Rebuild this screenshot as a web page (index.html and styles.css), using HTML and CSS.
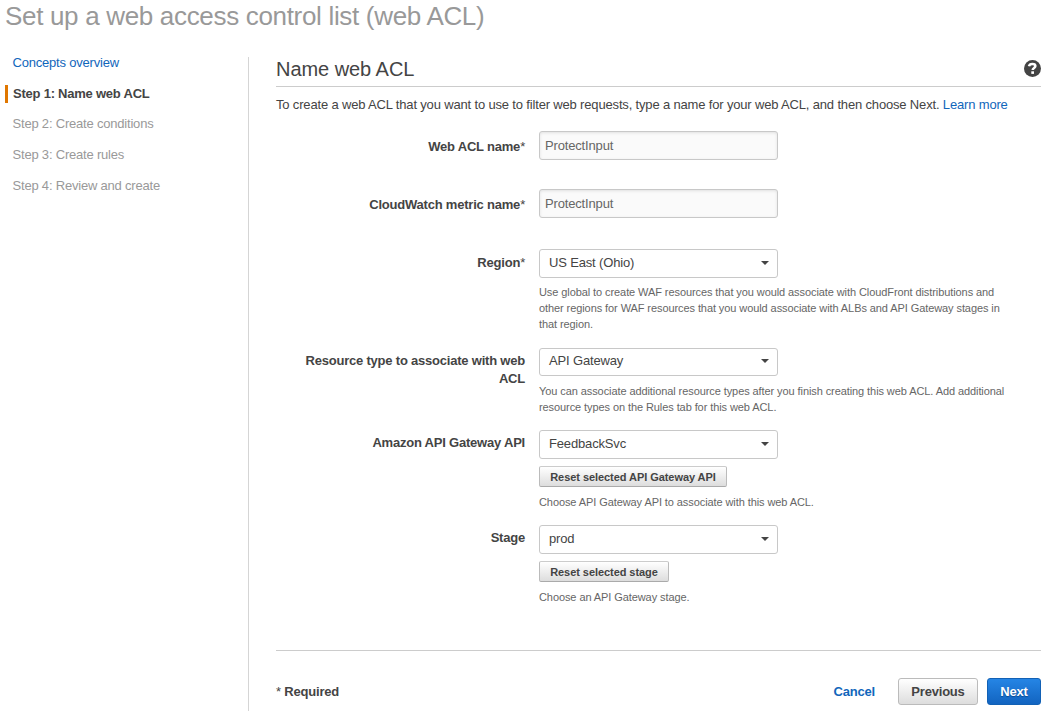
FILE: index.html
```html
<!DOCTYPE html>
<html lang="en">
<head>
<meta charset="utf-8">
<title>Set up a web ACL</title>
<link rel="stylesheet" href="styles.css">
</head>
<body>
<h1 class="page-title">Set up a web access control list (web ACL)</h1>
<div class="layout">
  <nav class="steps">
    <a class="step link">Concepts overview</a>
    <a class="step active">Step 1: Name web ACL</a>
    <a class="step">Step 2: Create conditions</a>
    <a class="step">Step 3: Create rules</a>
    <a class="step">Step 4: Review and create</a>
  </nav>
  <main class="content">
    <header class="section-head">
      <h2 class="section-title">Name web ACL</h2>
      <svg class="help" viewBox="0 0 17 17" width="17" height="17"><circle cx="8.5" cy="8.5" r="8.5" fill="#444"/><path d="M5 6.3C5.3 4.6 6.6 3.9 8.4 3.9c1.9 0 3 .9 3 2.2 0 1.9-2.7 1.8-2.7 4" fill="none" stroke="#fff" stroke-width="2.5"/><rect x="7.3" y="11.3" width="2.7" height="2.6" fill="#fff"/></svg>
    </header>
    <p class="intro">To create a web ACL that you want to use to filter web requests, type a name for your web ACL, and then choose Next. <a class="link">Learn more</a></p>
    <form class="form">
      <div class="row row-name">
        <label class="label">Web ACL name<span class="star">*</span></label>
        <div class="field"><div class="input">ProtectInput</div></div>
      </div>
      <div class="row row-metric">
        <label class="label">CloudWatch metric name<span class="star">*</span></label>
        <div class="field"><div class="input">ProtectInput</div></div>
      </div>
      <div class="row row-region">
        <label class="label">Region<span class="star">*</span></label>
        <div class="field">
          <div class="select">US East (Ohio)<i class="caret"></i></div>
          <p class="hint">Use global to create WAF resources that you would associate with CloudFront distributions and<br>other regions for WAF resources that you would associate with ALBs and API Gateway stages in<br>that region.</p>
        </div>
      </div>
      <div class="row row-resource">
        <label class="label">Resource type to associate with web<br>ACL</label>
        <div class="field">
          <div class="select short">API Gateway<i class="caret"></i></div>
          <p class="hint">You can associate additional resource types after you finish creating this web ACL. Add additional<br>resource types on the Rules tab for this web ACL.</p>
        </div>
      </div>
      <div class="row row-api">
        <label class="label">Amazon API Gateway API</label>
        <div class="field">
          <div class="select">FeedbackSvc<i class="caret"></i></div>
          <div class="reset reset-api">Reset selected API Gateway API</div>
          <p class="hint">Choose API Gateway API to associate with this web ACL.</p>
        </div>
      </div>
      <div class="row row-stage">
        <label class="label">Stage</label>
        <div class="field">
          <div class="select">prod<i class="caret"></i></div>
          <div class="reset reset-stage">Reset selected stage</div>
          <p class="hint">Choose an API Gateway stage.</p>
        </div>
      </div>
    </form>
    <footer class="footer">
      <span class="required"><span class="star">*</span> Required</span>
      <a class="cancel">Cancel</a>
      <div class="btn previous">Previous</div>
      <div class="btn next">Next</div>
    </footer>
  </main>
</div>
</body>
</html>
```
FILE: styles.css
```css
* { box-sizing: border-box; }
body {
  margin: 0;
  height: 711px;
  overflow: hidden;
  display: flex;
  flex-direction: column;
  background: #fff;
  color: #444;
  font: 13px/18px "Liberation Sans", Arial, sans-serif;
}
h1, h2, p { margin: 0; font-weight: normal; }
.page-title {
  height: 57px;
  padding: 0 0 0 5px;
  font-size: 26px;
  line-height: 32px;
  letter-spacing: -0.32px;
  color: #999;
  white-space: nowrap;
}
.layout { flex: 1; display: flex; }
.steps {
  width: 249px;
  border-right: 1px solid #d5d5d5;
  padding: 0 0 0 5px;
  display: flex;
  flex-direction: column;
  gap: 12.7px;
}
.step {
  height: 18px;
  padding-left: 7.5px;
  line-height: 18px;
  letter-spacing: -0.2px;
  color: #999;
  white-space: nowrap;
}
.step:first-child { margin-top: -3px; }
.active {
  padding-left: 5px;
  border-left: 3px solid #e07700;
  color: #444;
  font-weight: bold;
  letter-spacing: -0.23px;
}
.link, .step.link { color: #1166bb; }
.content { width: 765px; margin-left: 27px; }
.section-head {
  height: 30px;
  border-bottom: 1px solid #ccc;
  display: flex;
  justify-content: space-between;
}
.section-title { font-size: 20px; line-height: 24px; letter-spacing: -0.05px; }
.help { margin-top: 3px; }
.intro { padding-top: 9px; height: 44px; white-space: nowrap; letter-spacing: -0.164px; }
.row { display: flex; gap: 14px; }
.label {
  width: 249px;
  text-align: right;
  font-weight: bold;
  padding-top: 7px;
  white-space: nowrap;
  letter-spacing: -0.21px;
}
.star { font-weight: normal; }
.field { width: 480px; white-space: nowrap; }
.row-name { height: 58px; }
.row-metric { height: 60px; }
.row-region { height: 99px; }
.row-resource { height: 82px; }
.row-api { height: 95px; }
.row-stage { height: 125px; }
.row-region .label { padding-top: 5px; }
.row-resource .label, .row-api .label, .row-stage .label { padding-top: 4px; }
.input, .select {
  width: 239px;
  height: 29px;
  border: 1px solid #c8c8c8;
  border-radius: 3px;
  letter-spacing: -0.16px;
}
.input {
  padding: 5px;
  background: #fafafa;
  box-shadow: inset 0 1px 3px #e0e0e0;
  color: #666;
}
.select {
  padding: 4px 8px 0 9px;
  display: flex;
  justify-content: space-between;
}
.short { height: 28px; padding-top: 3px; }
.caret {
  margin-top: 7px;
  width: 0;
  height: 0;
  border: 4px solid transparent;
  border-top-color: #444;
  border-bottom: 0;
}
.hint { margin-top: 7px; font-size: 11px; line-height: 16px; letter-spacing: -0.085px; color: #666; }
.row-region .hint { margin-top: 6px; }
.reset {
  margin-top: 7px;
  height: 21px;
  border: 1px solid #bbb;
  border-color: #ccc #bbb #aaa;
  border-radius: 2px;
  background: linear-gradient(#fff, #ddd);
  font-size: 11px;
  line-height: 20px;
  font-weight: bold;
  letter-spacing: -0.06px;
  text-align: center;
}
.reset-api { width: 188px; }
.reset-stage { width: 130px; }
.footer {
  height: 61px;
  border-top: 1px solid #ccc;
  padding-top: 27px;
  display: flex;
  font-weight: bold;
  line-height: 26px;
  letter-spacing: -0.2px;
}
.required { margin-right: auto; line-height: 27px; }
.cancel { color: #1166bb; margin-right: 23px; line-height: 27px; }
.btn {
  height: 27px;
  border: 1px solid #bbb;
  border-radius: 3px;
  text-align: center;
}
.previous { width: 80px; margin-right: 9px; background: linear-gradient(#fff, #ddd); }
.next {
  width: 54px;
  border-color: #1261b5;
  background: linear-gradient(#2585e5, #1264c0);
  color: #fff;
  text-shadow: 0 1px 1px #0a4a90;
}
```
